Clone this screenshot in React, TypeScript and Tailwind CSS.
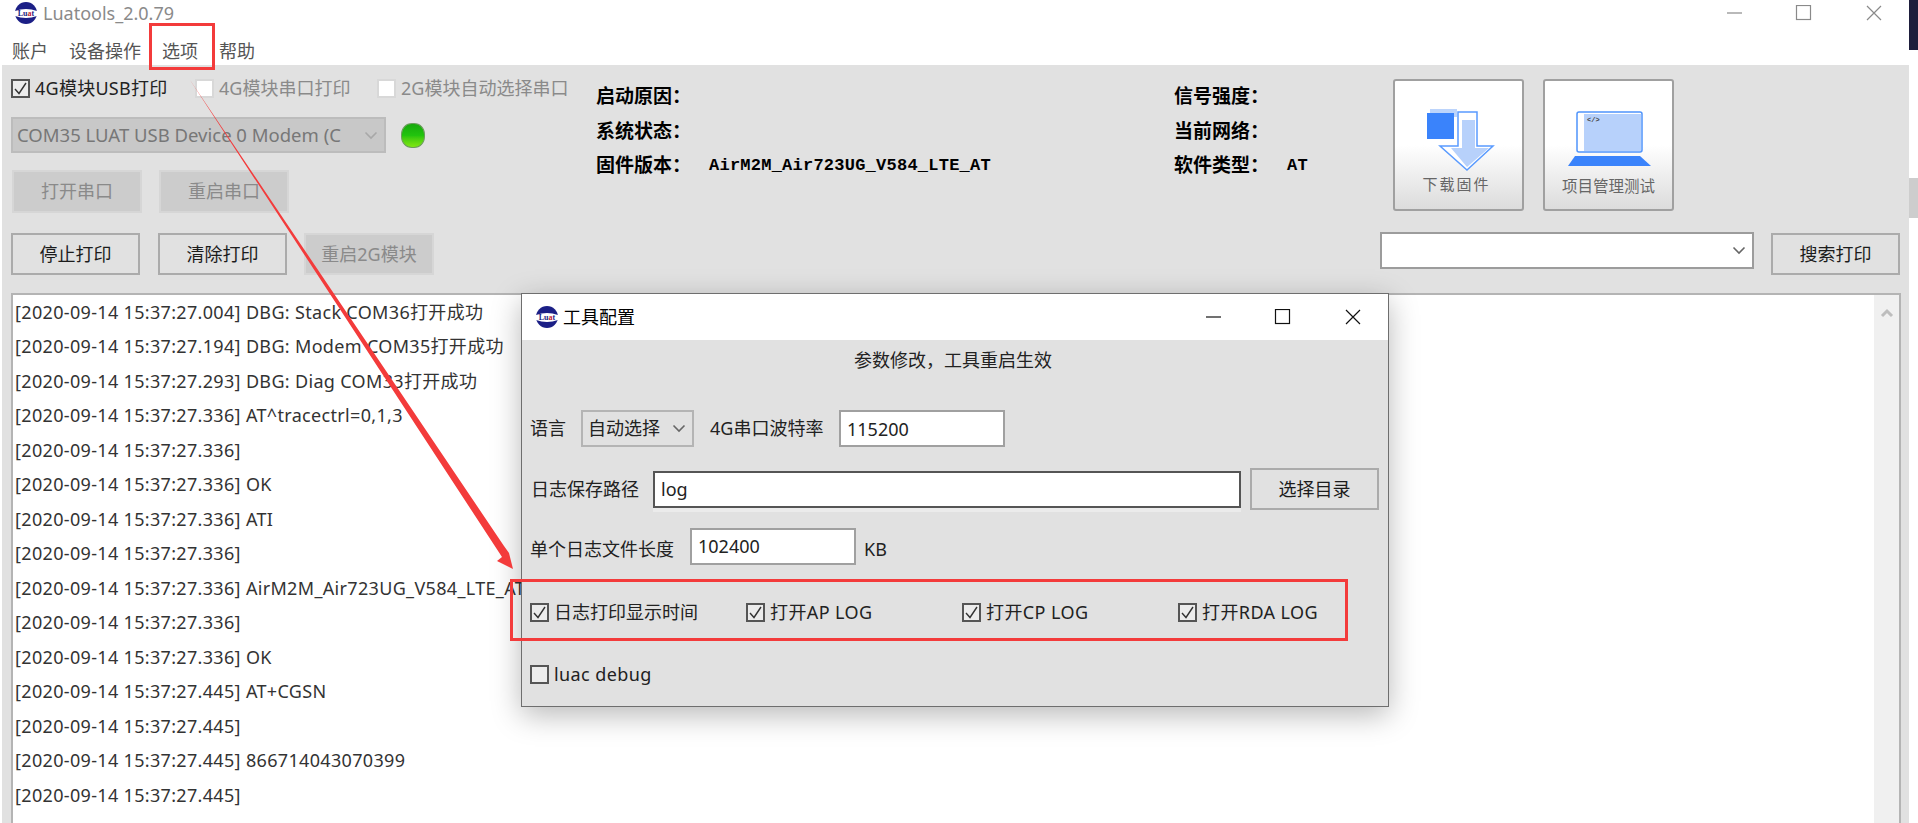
const FONT = "font-['Noto_Sans','Noto_Sans_CJK_SC',sans-serif]";

function Logo() {
  return (
    <svg width="24" height="24" viewBox="0 0 24 24" className="shrink-0">
      <circle cx="12" cy="12" r="11" fill="#1b1f86" />
      <path d="M1 10 Q12 6 23 10 L23 15 Q12 19 1 15 Z" fill="#fff" />
      <text x="12" y="15" textAnchor="middle" fontSize="8" fontWeight="700" fill="#1b1f86" fontFamily="Liberation Serif, serif">Lu<tspan fill="#c8202c">a</tspan>t</text>
    </svg>
  );
}

function Check({ checked, disabled }: { checked?: boolean; disabled?: boolean }) {
  return (
    <span className={`flex h-[19px] w-[19px] shrink-0 items-center justify-center border-2 ${disabled ? "border-[#d8d8d8] bg-white" : "border-[#555] bg-[#ececec]"}`}>
      {checked && (
        <svg width="15" height="15" viewBox="0 0 15 15" fill="none">
          <path d="M2 8 L6 12.5 L13 2" stroke="#333" strokeWidth="1.4" />
        </svg>
      )}
    </span>
  );
}

function CheckItem({ label, checked, disabled, className }: { label: string; checked?: boolean; disabled?: boolean; className?: string }) {
  return (
    <div className={`flex items-center gap-[5px] text-[18px] leading-[19px] whitespace-nowrap ${disabled ? "text-[#8a8a8a]" : "text-[#222]"} ${className ?? ""}`}>
      <Check checked={checked} disabled={disabled} />
      <span>{label}</span>
    </div>
  );
}

function Btn({ children, disabled, className }: { children: string; disabled?: boolean; className?: string }) {
  return (
    <div className={`flex items-center justify-center border-2 text-[18px] whitespace-nowrap ${disabled ? "border-[#d6d6d6] bg-[#cccccc] text-[#8a8a8a]" : "border-[#ababab] bg-[#e1e1e1] text-[#1c1c1c]"} ${className ?? ""}`}>
      {children}
    </div>
  );
}

function Chevron({ color = "#666" }: { color?: string }) {
  return (
    <svg width="14" height="9" viewBox="0 0 14 9" fill="none" className="shrink-0">
      <path d="M1.5 1.5 L7 7 L12.5 1.5" stroke={color} strokeWidth="1.6" />
    </svg>
  );
}

function WinControls({ color }: { color: string }) {
  return (
    <svg width="155" height="16" viewBox="0 0 155 16" fill="none" stroke={color} strokeWidth="1.2" className="shrink-0">
      <path d="M0 8 H15" />
      <rect x="69.5" y="0.5" width="14" height="14" />
      <path d="M140 1 L154 15 M154 1 L140 15" />
    </svg>
  );
}

function StatusRow({ label, value }: { label: string; value?: string }) {
  return (
    <div className="flex h-[34.5px] items-center">
      <span className="w-[113px] text-[19px] font-bold whitespace-nowrap text-black">{label}</span>
      {value && <span className="font-['Liberation_Mono',monospace] text-[17px] font-bold tracking-[0.24px] whitespace-nowrap text-black">{value}</span>}
    </div>
  );
}

function BigButton({ label, children, labelClass }: { label: string; children: React.ReactNode; labelClass: string }) {
  return (
    <div className="flex h-[132px] w-[131px] flex-col items-center rounded-[3px] border-2 border-[#a0a0a0] bg-gradient-to-b from-white via-white to-[#dcdcdc]">
      <svg width="127" height="66" viewBox="0 0 127 66" className="mt-[26px] shrink-0">{children}</svg>
      <span className={`text-[#666] whitespace-nowrap ${labelClass}`}>{label}</span>
    </div>
  );
}

const logRows = [
  "[2020-09-14 15:37:27.004] DBG: Stack COM36打开成功",
  "[2020-09-14 15:37:27.194] DBG: Modem COM35打开成功",
  "[2020-09-14 15:37:27.293] DBG: Diag COM33打开成功",
  "[2020-09-14 15:37:27.336] AT^tracectrl=0,1,3",
  "[2020-09-14 15:37:27.336]",
  "[2020-09-14 15:37:27.336] OK",
  "[2020-09-14 15:37:27.336] ATI",
  "[2020-09-14 15:37:27.336]",
  "[2020-09-14 15:37:27.336] AirM2M_Air723UG_V584_LTE_AT",
  "[2020-09-14 15:37:27.336]",
  "[2020-09-14 15:37:27.336] OK",
  "[2020-09-14 15:37:27.445] AT+CGSN",
  "[2020-09-14 15:37:27.445]",
  "[2020-09-14 15:37:27.445] 866714043070399",
  "[2020-09-14 15:37:27.445]",
  "[2020-09-14 15:37:27.445] OK",
];

function ConfigDialog() {
  return (
    <div className="absolute top-[293px] left-[521px] flex h-[414px] w-[868px] flex-col border border-[#6e6e6e] bg-[#e1e1e1] text-[18px] text-[#222] shadow-[0_8px_28px_rgba(0,0,0,0.28)]">
      <div className="flex h-[46px] shrink-0 items-center bg-white pr-[27px] pl-[13px] text-black">
        <Logo />
        <span className="ml-[4px] flex-1">工具配置</span>
        <WinControls color="#111" />
      </div>
      <div className="flex h-[40px] shrink-0 items-center justify-center pr-[4px]">参数修改，工具重启生效</div>
      <div className="mt-[30px] flex h-[37px] items-center pl-[8px]">
        <span className="w-[51px]">语言</span>
        <div className="flex h-[37px] w-[113px] items-center justify-between border-2 border-[#b4b4b4] pr-[6px] pl-[5px]">
          <span>自动选择</span>
          <Chevron />
        </div>
        <span className="ml-[16px] w-[129px]">4G串口波特率</span>
        <div className="flex h-[37px] w-[166px] items-center border-2 border-[#a0a0a0] bg-white pl-[6px] leading-none">115200</div>
      </div>
      <div className="mt-[21px] flex items-center pl-[9px]">
        <span className="w-[122px]">日志保存路径</span>
        <div className="flex h-[37px] w-[588px] items-center border-2 border-[#555] bg-white pl-[6px] shadow-[0_4px_0_#ebebeb]">log</div>
        <Btn className="ml-[9px] h-[42px] w-[129px]">选择目录</Btn>
      </div>
      <div className="mt-[18px] flex h-[37px] items-center pl-[8px]">
        <span className="w-[160px] pt-[6px]">单个日志文件长度</span>
        <div className="flex h-[37px] w-[166px] items-center border-2 border-[#a0a0a0] bg-white pl-[6px]">102400</div>
        <span className="ml-[8px] pt-[6px]">KB</span>
      </div>
      <div className="mt-[38px] flex pl-[8px]">
        <CheckItem checked label="日志打印显示时间" className="w-[216px]" />
        <CheckItem checked label="打开AP LOG" className="w-[216px] tracking-[0.4px]" />
        <CheckItem checked label="打开CP LOG" className="w-[216px] tracking-[0.4px]" />
        <CheckItem checked label="打开RDA LOG" className="tracking-[0.4px]" />
      </div>
      <div className="mt-[43px] flex pl-[8px]">
        <CheckItem label="luac debug" className="tracking-[0.4px]" />
      </div>
    </div>
  );
}

export default function App() {
  return (
    <div className={`relative flex h-[823px] w-[1918px] overflow-hidden bg-white ${FONT}`}>
      <div className="ml-[2px] flex w-[1907px] flex-col">
        <div className="flex h-[26px] shrink-0 items-center pr-[27px] pl-[12px]">
          <Logo />
          <span className="ml-[5px] flex-1 text-[18px] text-[#8a8a8a]">Luatools_2.0.79</span>
          <WinControls color="#8a8a8a" />
        </div>
        <div className="flex h-[39px] shrink-0 items-center gap-[21px] pt-[11px] pl-[10px] text-[18px] text-[#555]">
          <span>账户</span>
          <span>设备操作</span>
          <span>选项</span>
          <span>帮助</span>
        </div>

        <div className="flex min-h-0 flex-1 flex-col bg-[#e1e1e1]">
          <div className="flex h-[168px] shrink-0 pt-[14px] pl-[9px]">
            <div className="w-[585px]">
              <div className="flex">
                <CheckItem checked label="4G模块USB打印" className="w-[184px] tracking-[0.25px]" />
                <CheckItem disabled label="4G模块串口打印" className="w-[182px]" />
                <CheckItem disabled label="2G模块自动选择串口" />
              </div>
              <div className="mt-[19px] flex items-center">
                <div className="flex h-[36px] w-[375px] items-center border-2 border-[#bcbcbc] bg-[#c8c8c8] pr-[6px] pl-[4px] text-[18.5px] text-[#777]">
                  <span className="flex-1 whitespace-nowrap">COM35 LUAT USB Device 0 Modem (C</span>
                  <Chevron color="#a8a8a8" />
                </div>
                <div className="ml-[15px] h-[25px] w-[24px] rounded-[45%] border border-[#6a9d5a] bg-gradient-to-b from-[#16a90c] via-[#22c40e] to-[#7fe813]" />
              </div>
              <div className="mt-[17px] flex gap-[17px] pl-[1px]">
                <Btn disabled className="h-[43px] w-[130px]">打开串口</Btn>
                <Btn disabled className="h-[43px] w-[130px]">重启串口</Btn>
              </div>
            </div>
            <div className="w-[578px]">
              <StatusRow label="启动原因：" />
              <StatusRow label="系统状态：" />
              <StatusRow label="固件版本：" value="AirM2M_Air723UG_V584_LTE_AT" />
            </div>
            <div className="w-[219px]">
              <StatusRow label="信号强度：" />
              <StatusRow label="当前网络：" />
              <StatusRow label="软件类型：" value="AT" />
            </div>
            <div className="flex gap-[19px]">
              <BigButton label="下载固件" labelClass="text-[15px] tracking-[2px] -translate-x-[2px]">
                <path d="M35 2 H62 V10 H35 Z" fill="#bcd4fb" />
                <path d="M63 5 H82 V39 H98 L72 63 L45 39 H63 Z" fill="#fff" stroke="#5a9bff" strokeWidth="1.5" />
                <path d="M67 13 H80 V41 H94 L72 60 L56 41 H67 Z" fill="#b7d1fb" />
                <rect x="32" y="6" width="27" height="26" fill="#3a83fb" />
              </BigButton>
              <BigButton label="项目管理测试" labelClass="text-[15.5px] mt-[2px]">
                <rect x="32" y="5" width="65" height="40" rx="2" fill="#fff" stroke="#4f94fb" strokeWidth="1.5" />
                <rect x="39" y="7" width="57" height="37" fill="#b7d1fb" />
                <text x="42" y="15" fontSize="7" fontWeight="700" fill="#444" fontFamily="Liberation Mono, monospace">&lt;/&gt;</text>
                <path d="M30 49 H95 L106 59 H23 Z" fill="#3a83fb" />
              </BigButton>
            </div>
          </div>

          <div className="flex h-[42px] shrink-0 items-start pr-[9px] pl-[9px]">
            <Btn className="h-[42px] w-[129px]">停止打印</Btn>
            <Btn className="ml-[18px] h-[42px] w-[129px]">清除打印</Btn>
            <Btn disabled className="ml-[17px] h-[42px] w-[130px]">重启2G模块</Btn>
            <div className="mt-[-1px] ml-auto flex h-[37px] w-[374px] items-center justify-end border-2 border-[#9c9c9c] bg-white pr-[6px]">
              <Chevron />
            </div>
            <Btn className="ml-[17px] h-[42px] w-[129px]">搜索打印</Btn>
          </div>

          <div className="mt-[18px] mr-[8px] ml-[9px] flex min-h-0 flex-1 overflow-hidden border-2 border-b-0 border-[#b4b4b4] bg-white">
            <div className="flex-1 pl-[2px] text-[18px] tracking-[0.33px] text-[#333]">
              {logRows.map((row, i) => (
                <div key={i} className="flex h-[34.5px] items-center whitespace-nowrap">{row}</div>
              ))}
            </div>
            <div className="flex w-[25px] justify-center bg-[#f0f0f0] pt-[13px]">
              <svg width="14" height="10" viewBox="0 0 14 10" fill="none">
                <path d="M2 8 L7 3 L12 8" stroke="#bdbdbd" strokeWidth="3" />
              </svg>
            </div>
          </div>
        </div>
      </div>

      <div className="flex w-[9px] flex-col">
        <div className="h-[50px] bg-[#1e1e3c]" />
        <div className="mt-[128px] h-[40px] bg-[#cdcdcd]" />
      </div>

      <ConfigDialog />

      {/* annotations */}
      <div className="pointer-events-none absolute top-[23px] left-[149px] h-[47px] w-[66px] border-[3px] border-[#f33b3b]" />
      <div className="pointer-events-none absolute top-[579px] left-[510px] h-[62px] w-[838px] border-[3px] border-[#f33b3b]" />
      <svg width="1918" height="823" className="pointer-events-none absolute top-0 left-0">
        <path d="M190 80 L504 546 L509 553 L513 569 L497 561 L502 557 Z" fill="#f33b3b" />
      </svg>
    </div>
  );
}
